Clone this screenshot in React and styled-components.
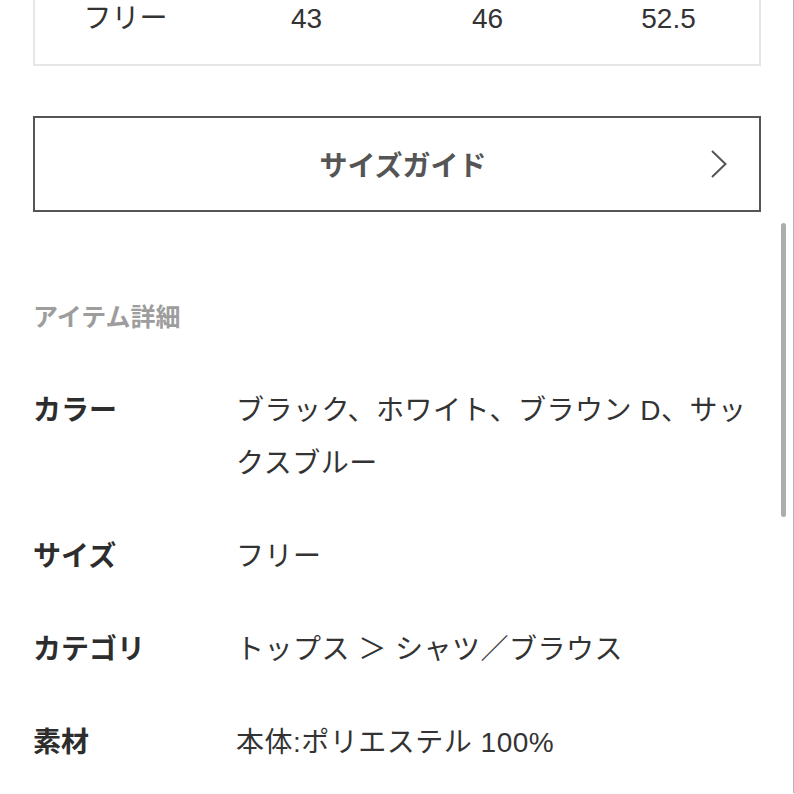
import React from 'react';
import styled, { createGlobalStyle } from 'styled-components';

const GlobalStyle = createGlobalStyle`
  html, body {
    margin: 0;
    padding: 0;
    background: #fff;
  }
  body {
    font-family: "Liberation Sans", "Noto Sans CJK JP", sans-serif;
    color: #333;
    overflow: hidden;
  }
`;

const Page = styled.div`
  position: relative;
  width: 794px;
  height: 794px;
  padding: 0 33px;
  box-sizing: border-box;
`;

const SizeTable = styled.div`
  margin-top: -1px;
  border: 2px solid #e6e6e6;
  border-top-width: 1px;
  padding-bottom: 27px;
`;

const SizeRow = styled.div`
  display: grid;
  grid-template-columns: repeat(4, 1fr);
  height: 37px;
  align-items: center;
`;

const SizeCell = styled.div`
  text-align: center;
  font-size: 28px;
  line-height: 36px;
  color: #333;
`;

const GuideButton = styled.div`
  margin-top: 50px;
  height: 96px;
  box-sizing: border-box;
  border: 2px solid #555;
  display: grid;
  grid-template-columns: 1fr auto 1fr;
  align-items: center;
  padding: 0 31px 0 43px;
`;

const GuideLabel = styled.span`
  grid-column: 2;
  font-size: 28px;
  font-weight: 700;
  color: #555;
`;

const GuideArrow = styled.svg`
  grid-column: 3;
  justify-self: end;
  display: block;
`;

const SectionTitle = styled.h2`
  margin: 90px 0 0;
  font-size: 25px;
  line-height: 30px;
  font-weight: 700;
  color: #9d9d9d;
`;

const DetailList = styled.dl`
  margin: 52px 0 0;
  display: grid;
  grid-template-columns: 203px 1fr;
  row-gap: 40px;
`;

const Term = styled.dt`
  font-size: 28px;
  line-height: 53px;
  font-weight: 700;
  color: #2d2d2d;
`;

const Desc = styled.dd`
  margin: 0;
  font-size: 28px;
  line-height: 53px;
  letter-spacing: 0.5px;
  color: #333;
`;

const ScrollThumb = styled.div`
  position: absolute;
  left: 781px;
  top: 224px;
  width: 5px;
  height: 294px;
  border-radius: 3px;
  background: #adadad;
`;

const EdgeLine = styled.div`
  position: absolute;
  left: 793px;
  top: 0;
  width: 1px;
  height: 100%;
  background: #b4b4b4;
`;

const sizes = ['フリー', '43', '46', '52.5'];

const details = [
  { label: 'カラー', value: 'ブラック、ホワイト、ブラウン D、サックスブルー' },
  { label: 'サイズ', value: 'フリー' },
  { label: 'カテゴリ', value: 'トップス ＞ シャツ／ブラウス' },
  { label: '素材', value: '本体:ポリエステル 100%' },
];

export default function App() {
  return (
    <Page>
      <GlobalStyle />
      <SizeTable>
        <SizeRow>
          {sizes.map((s) => (
            <SizeCell key={s}>{s}</SizeCell>
          ))}
        </SizeRow>
      </SizeTable>

      <GuideButton>
        <GuideLabel>サイズガイド</GuideLabel>
        <GuideArrow width="18" height="30" viewBox="0 0 18 30">
          <path d="M2 2 L15.5 15 L2 28" fill="none" stroke="#555" strokeWidth="2" />
        </GuideArrow>
      </GuideButton>

      <SectionTitle>アイテム詳細</SectionTitle>

      <DetailList>
        {details.map((d) => (
          <React.Fragment key={d.label}>
            <Term>{d.label}</Term>
            <Desc>{d.value}</Desc>
          </React.Fragment>
        ))}
      </DetailList>

      <ScrollThumb />
      <EdgeLine />
    </Page>
  );
}
